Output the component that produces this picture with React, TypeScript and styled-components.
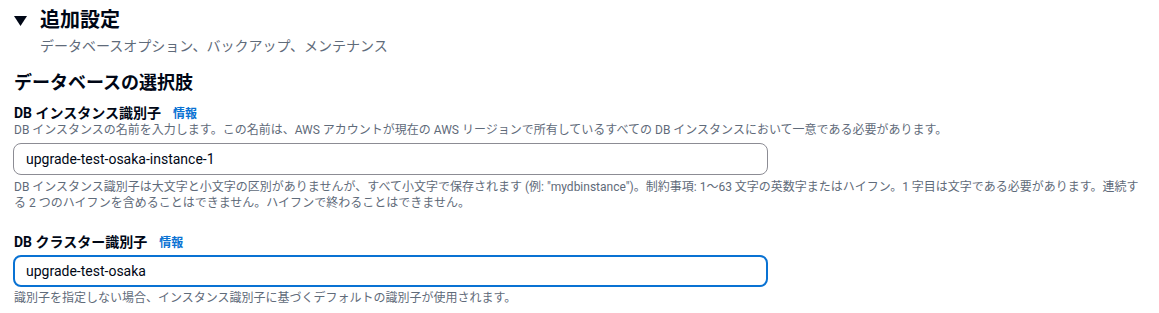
import React from "react";
import styled, { createGlobalStyle } from "styled-components";

const FONT = `"Roboto", "Noto Sans CJK JP", sans-serif`;

const Global = createGlobalStyle`
  html, body { margin: 0; padding: 0; background: #ffffff; }
  body {
    font-family: ${FONT};
    color: #000716;
  }
  * { box-sizing: border-box; }
`;

const Page = styled.div`
  padding: 8px 12px 0 13px;
  display: flex;
  flex-direction: column;
`;

const Header = styled.div`
  display: flex;
  align-items: center;
  gap: 13px;
`;

const Caret = styled.svg`
  width: 13px;
  height: 10px;
  margin-left: 1px;
  margin-top: 1px;
  flex-shrink: 0;
`;

const Title = styled.h2`
  margin: 0;
  font-size: 20px;
  line-height: 24px;
  font-weight: 700;
`;

const Subtitle = styled.div`
  margin: 4px 0 0 27px;
  font-size: 14px;
  line-height: 20px;
  color: #5f6b7a;
`;

const SectionHeading = styled.h3`
  margin: 16px 0 0 1px;
  font-size: 18px;
  line-height: 22px;
  font-weight: 700;
`;

const Field = styled.div<{ $gap: number }>`
  margin-top: ${(p) => p.$gap}px;
  display: flex;
  flex-direction: column;
`;

const LabelRow = styled.div`
  display: flex;
  align-items: baseline;
  gap: 12px;
  margin-left: 1px;
`;

const Label = styled.label`
  font-size: 14px;
  line-height: 18px;
  font-weight: 700;
`;

const InfoLink = styled.a`
  font-size: 12px;
  font-weight: 700;
  color: #0972d3;
  text-decoration: none;
`;

const Description = styled.div`
  margin-left: 1px;
  font-size: 12px;
  line-height: 16px;
  color: #5f6b7a;
`;

const Input = styled.input<{ $focused?: boolean }>`
  width: 755px;
  height: 32px;
  margin: ${(p) => (p.$focused ? "4px 0 3px" : "5px 0 4px")};
  padding: 0 ${(p) => (p.$focused ? 11 : 12)}px;
  border-radius: 8px;
  border: ${(p) => (p.$focused ? "2px solid #0972d3" : "1px solid #8c8c94")};
  font-family: ${FONT};
  font-size: 14px;
  color: #000716;
  background: #ffffff;
  outline: none;
`;

const Constraint = styled.div`
  margin-left: 1px;
  font-size: 12px;
  line-height: 16px;
  color: #5f6b7a;
`;

export default function App() {
  return (
    <>
      <Global />
      <Page>
        <Header>
          <Caret viewBox="0 0 13 10">
            <polygon points="0,0 13,0 6.5,10" fill="#000716" />
          </Caret>
          <Title>追加設定</Title>
        </Header>
        <Subtitle>データベースオプション、バックアップ、メンテナンス</Subtitle>
        <SectionHeading>データベースの選択肢</SectionHeading>
        <Field $gap={10}>
          <LabelRow>
            <Label>DB インスタンス識別子</Label>
            <InfoLink href="#">情報</InfoLink>
          </LabelRow>
          <Description>
            DB インスタンスの名前を入力します。この名前は、AWS アカウントが現在の AWS リージョンで所有しているすべての DB インスタンスにおいて一意である必要があります。
          </Description>
          <Input defaultValue="upgrade-test-osaka-instance-1" readOnly />
          <Constraint>
            DB インスタンス識別子は大文字と小文字の区別がありませんが、すべて小文字で保存されます (例: "mydbinstance")。制約事項: 1～63 文字の英数字またはハイフン。1 字目は文字である必要があります。連続する 2 つのハイフンを含めることはできません。ハイフンで終わることはできません。
          </Constraint>
        </Field>
        <Field $gap={22}>
          <LabelRow>
            <Label>DB クラスター識別子</Label>
            <InfoLink href="#">情報</InfoLink>
          </LabelRow>
          <Input $focused defaultValue="upgrade-test-osaka" readOnly />
          <Description>識別子を指定しない場合、インスタンス識別子に基づくデフォルトの識別子が使用されます。</Description>
        </Field>
      </Page>
    </>
  );
}
